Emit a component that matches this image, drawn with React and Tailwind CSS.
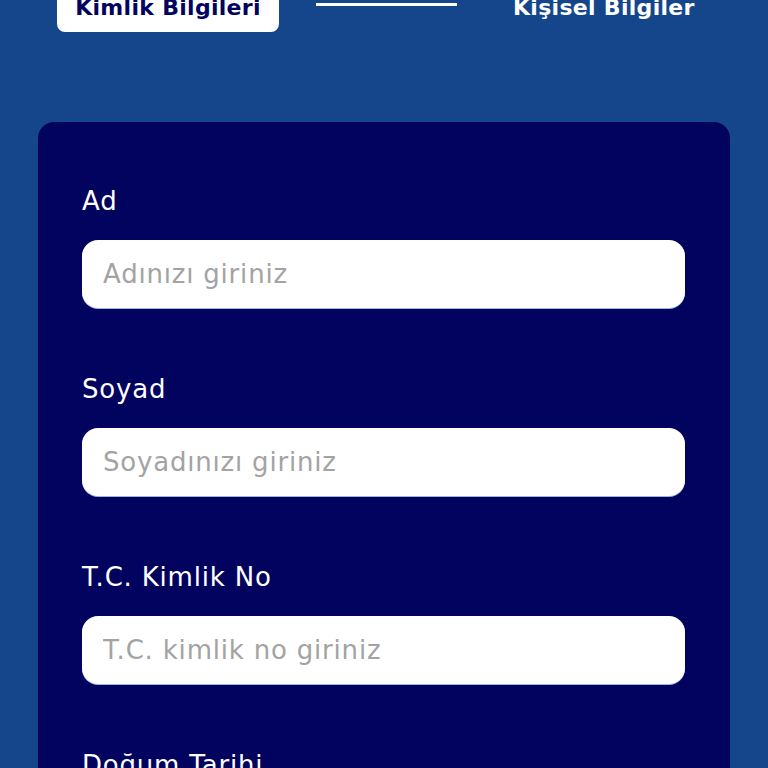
import { useState } from "react";

const fields = [
  { label: "Ad", placeholder: "Adınızı giriniz" },
  { label: "Soyad", placeholder: "Soyadınızı giriniz" },
  { label: "T.C. Kimlik No", placeholder: "T.C. kimlik no giriniz" },
  { label: "Doğum Tarihi", placeholder: "GG.AA.YYYY" },
];

export default function App() {
  const [values, setValues] = useState({});

  return (
    <div className="min-h-screen overflow-hidden bg-[#15458a] font-['DejaVu_Sans',sans-serif]">
      {/* Steps */}
      <div className="-mt-[18px] flex items-center pl-[57px]">
        <div className="flex h-[50px] w-[222px] items-center justify-center rounded-lg bg-white text-[22px] font-bold tracking-[0.3px] text-[#02035e]">
          Kimlik Bilgileri
        </div>
        <div className="ml-[37px] h-[3px] w-[141px] -translate-y-[3px] bg-white" />
        <div className="ml-[56px] text-[22px] font-bold tracking-[0.3px] text-white">Kişisel Bilgiler</div>
      </div>

      {/* Form card */}
      <div className="mx-[38px] mt-[90px] rounded-2xl bg-[#02035e] pb-10 pl-[44px] pr-[45px] pt-[60px]">
        <div className="flex flex-col gap-[62px]">
          {fields.map((f) => (
            <div key={f.label} className="flex flex-col gap-[19px]">
              <label className="text-[26px] leading-[39px] tracking-[0.8px] text-white">{f.label}</label>
              <input
                className="h-[68px] w-full rounded-2xl bg-white pl-[21px] text-[26px] tracking-[0.8px] text-gray-700 shadow-[0_1px_0_#9db4e0] outline-none placeholder:text-[#a3a3a3]"
                placeholder={f.placeholder}
                value={values[f.label] || ""}
                onChange={(e) => setValues({ ...values, [f.label]: e.target.value })}
              />
            </div>
          ))}
        </div>
      </div>
    </div>
  );
}
